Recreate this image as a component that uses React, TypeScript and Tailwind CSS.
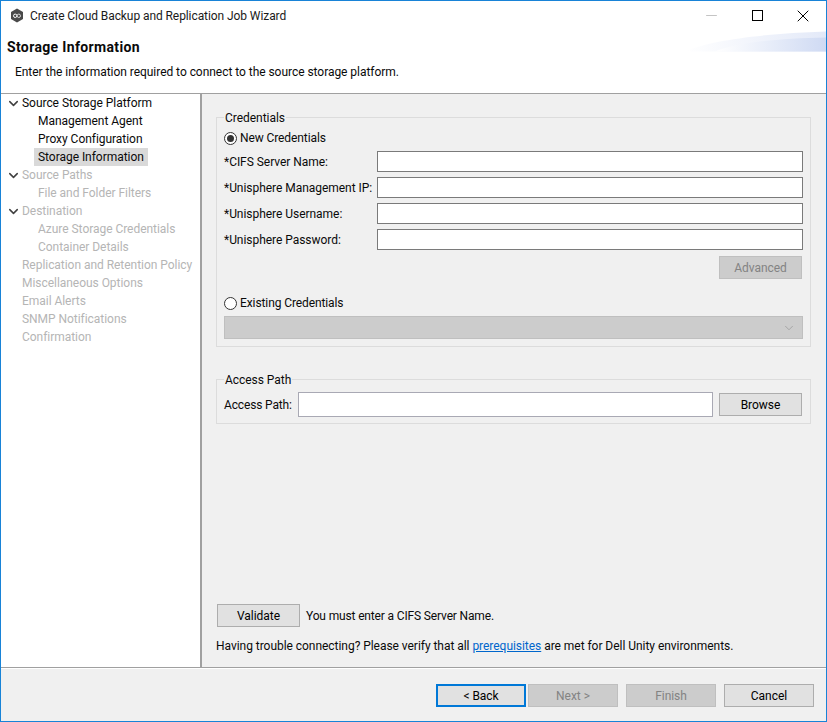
import { ChevronDown, Minus, X } from "lucide-react";

const sidebarRows = [
  { label: "Source Storage Platform", level: 0, arrow: true },
  { label: "Management Agent", level: 1 },
  { label: "Proxy Configuration", level: 1 },
  { label: "Storage Information", level: 1, selected: true },
  { label: "Source Paths", level: 0, arrow: true, disabled: true },
  { label: "File and Folder Filters", level: 1, disabled: true },
  { label: "Destination", level: 0, arrow: true, disabled: true },
  { label: "Azure Storage Credentials", level: 1, disabled: true },
  { label: "Container Details", level: 1, disabled: true },
  { label: "Replication and Retention Policy", level: 0, disabled: true },
  { label: "Miscellaneous Options", level: 0, disabled: true },
  { label: "Email Alerts", level: 0, disabled: true },
  { label: "SNMP Notifications", level: 0, disabled: true },
  { label: "Confirmation", level: 0, disabled: true },
];

const credentialFields = ["*CIFS Server Name:", "*Unisphere Management IP:", "*Unisphere Username:", "*Unisphere Password:"];

function AppIcon() {
  return (
    <svg width="14" height="15" viewBox="0 0 14 15">
      <path d="M7 0.5 L13 4 V11 L7 14.5 L1 11 V4 Z" fill="#4a4a4a" />
      <circle cx="5.2" cy="7.8" r="1.7" fill="none" stroke="#fff" strokeWidth="1" />
      <circle cx="8.8" cy="7.8" r="1.7" fill="none" stroke="#d8d8d8" strokeWidth="1" />
    </svg>
  );
}

function Banner() {
  return (
    <svg width="141" height="21" viewBox="0 0 141 21" className="shrink-0">
      <defs>
        <linearGradient id="bannerFill" x1="0" x2="1" y1="0" y2="0">
          <stop offset="0" stopColor="#ffffff" />
          <stop offset="1" stopColor="#cfdaf3" />
        </linearGradient>
        <linearGradient id="bannerTop" x1="0" x2="1" y1="0" y2="0">
          <stop offset="0" stopColor="#ffffff" />
          <stop offset="1" stopColor="#e3e9f8" />
        </linearGradient>
      </defs>
      <path d="M0 20.5 C25 9 80 2.5 141 0.5 V20.5 Z" fill="url(#bannerTop)" />
      <path d="M30 20.5 C50 12 90 7.5 141 6.5 V20.5 Z" fill="url(#bannerFill)" />
    </svg>
  );
}

function Radio({ checked, label }: { checked?: boolean; label: string }) {
  return (
    <div className="flex items-center gap-[3px]">
      <span className="w-[13px] h-[13px] rounded-full border border-[#333333] bg-white flex items-center justify-center">
        {checked && <span className="w-[7px] h-[7px] rounded-full bg-[#333333]" />}
      </span>
      <span className="tracking-[-0.1px]">{label}</span>
    </div>
  );
}

function Btn({ label, disabled, focused, className }: { label: string; disabled?: boolean; focused?: boolean; className: string }) {
  const look = disabled
    ? "bg-[#cccccc] border border-[#bfbfbf] text-[#838383]"
    : focused
      ? "bg-[#e1e1e1] border-2 border-[#0078d7] text-black"
      : "bg-[#e1e1e1] border border-[#adadad] text-black";
  return <button className={`h-[23px] flex items-center justify-center shrink-0 ${look} ${className}`}>{label}</button>;
}

export default function App() {
  return (
    <div
      className="w-[827px] h-[722px] border border-[#1883d7] bg-white flex flex-col text-[12px] leading-[16px] tracking-[-0.04px] text-[#0a0a0a] overflow-hidden"
      style={{ fontFamily: 'Roboto, "Noto Sans", sans-serif' }}
    >
      {/* Title bar */}
      <div className="h-[29px] flex items-center shrink-0 pl-[9px]">
        <AppIcon />
        <span className="ml-[6px] text-[#1a1a1a] tracking-[-0.08px]">Create Cloud Backup and Replication Job Wizard</span>
        <div className="ml-auto flex items-center text-black">
          <div className="w-[46px] flex justify-center text-[#c4c4c4]">
            <Minus size={17} strokeWidth={1} absoluteStrokeWidth />
          </div>
          <div className="w-[46px] flex justify-center">
            <div className="w-[11px] h-[11px] border border-black" />
          </div>
          <div className="w-[46px] flex justify-center">
            <X size={20} strokeWidth={1} absoluteStrokeWidth />
          </div>
        </div>
      </div>

      {/* Header */}
      <div className="h-[64px] shrink-0 border-b border-[#a0a0a0] flex flex-col">
        <div className="flex items-start justify-between h-[33px]">
          <div className="pl-[6px] pt-[8px] text-[14px] font-bold leading-[18px] tracking-[0.35px]">Storage Information</div>
          <div className="pt-[1px]">
            <Banner />
          </div>
        </div>
        <div className="pl-[14px] mt-[1px]">Enter the information required to connect to the source storage platform.</div>
      </div>

      <div className="flex-1 flex min-h-0">
        {/* Step tree */}
        <div className="w-[199px] shrink-0 bg-white">
          {sidebarRows.map((row) => (
            <div key={row.label} className="h-[18px] flex items-center whitespace-nowrap">
              {row.level === 0 ? (
                <div className="w-[21px] flex justify-center pl-[3px]">
                  {row.arrow && <ChevronDown size={15} strokeWidth={2.4} className="text-[#404040]" />}
                </div>
              ) : (
                <div className="w-[33px]" />
              )}
              <span className={`h-[18px] flex items-center ${row.level === 1 ? "px-[4px]" : ""} ${row.selected ? "bg-[#d9d9d9]" : ""} ${row.disabled ? "text-[#b5b5b5]" : ""}`}>
                {row.label}
              </span>
            </div>
          ))}
        </div>

        {/* Form panel */}
        <div className="flex-1 border-l-2 border-[#a0a0a0] bg-[#f0f0f0] flex flex-col pl-[14px] pr-[16px] pt-[14px]">
          <fieldset className="border border-[#dcdcdc] h-[239px] pl-[7px] pr-[7px] mt-0 min-w-0">
            <legend className="ml-0 px-[1px] pt-[2px]">Credentials</legend>
            <div className="mt-[4px] h-[16px]">
              <Radio checked label="New Credentials" />
            </div>
            <div className="mt-[5px] flex flex-col gap-[5px]">
              {credentialFields.map((f) => (
                <div key={f} className="flex items-center">
                  <span className="w-[153px] shrink-0 whitespace-nowrap">{f}</span>
                  <input className="flex-1 h-[21px] bg-white border border-[#7a7a7a] outline-none min-w-0" readOnly />
                </div>
              ))}
            </div>
            <div className="flex justify-end mt-[6px] pr-[1px]">
              <Btn label="Advanced" disabled className="w-[83px]" />
            </div>
            <div className="mt-[16px] h-[16px]">
              <Radio label="Existing Credentials" />
            </div>
            <div className="mt-[5px] h-[23px] bg-[#cccccc] border border-[#bfbfbf] flex items-center justify-end pr-[6px]">
              <ChevronDown size={14} strokeWidth={1} className="text-[#8a8a8a]" />
            </div>
          </fieldset>

          <fieldset className="border border-[#dcdcdc] h-[54px] mt-[23px] pl-[7px] pr-[8px] min-w-0">
            <legend className="ml-0 px-[1px] pt-[2px]">Access Path</legend>
            <div className="flex items-center mt-[4px]">
              <span className="w-[74px] shrink-0 tracking-[-0.15px]">Access Path:</span>
              <input className="w-[415px] h-[25px] bg-white border border-[#a9a9b4] outline-none" readOnly />
              <Btn label="Browse" className="w-[83px] ml-[6px]" />
            </div>
          </fieldset>

          <div className="mt-auto flex items-center pl-[1px]">
            <Btn label="Validate" className="w-[83px]" />
            <span className="ml-[6px] tracking-[-0.15px]">You must enter a CIFS Server Name.</span>
          </div>
          <div className="mt-[11px] mb-[13px]">
            Having trouble connecting? Please verify that all <a className="text-[#0066cc] underline">prerequisites</a> are met for Dell Unity environments.
          </div>
        </div>
      </div>

      {/* Button bar */}
      <div className="h-[54px] shrink-0 border-t border-[#a0a0a0] bg-[#f0f0f0] shadow-[inset_0_1px_0_#ffffff] flex items-start justify-end pt-[16px] pr-[12px]">
        <Btn label="< Back" focused className="w-[90px]" />
        <Btn label="Next >" disabled className="w-[90px] ml-[2px]" />
        <Btn label="Finish" disabled className="w-[90px] ml-[8px]" />
        <Btn label="Cancel" className="w-[90px] ml-[8px]" />
      </div>
    </div>
  );
}
